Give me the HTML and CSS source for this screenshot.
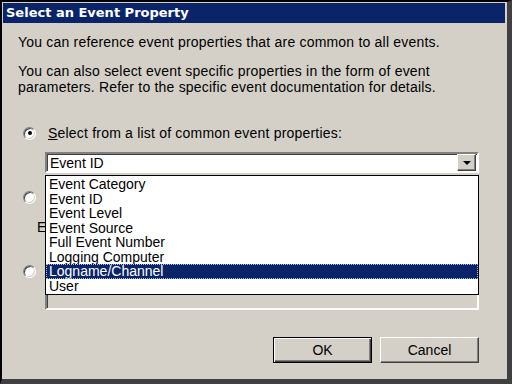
FILE: index.html
```
<!DOCTYPE html>
<html lang="en">
<head>
    <meta charset="UTF-8">
    <meta name="viewport" content="width=device-width, initial-scale=1.0">
    <title>Select an Event Property</title>
    <link rel="stylesheet" href="styles.css">
</head>
<body>
    <div class="window">
        <div class="titlebar">Select an Event Property</div>
        <div class="content">
            <p class="intro first">You can reference event properties that are common to all events.</p>
            <p class="intro second">You can also select event specific properties in the form of event<br>parameters. Refer to the specific event documentation for details.</p>

            <div class="option opt-common">
                <span class="radio checked"></span>
                <span class="option-text"><u>S</u>elect from a list of common event properties:</span>
            </div>
            <div class="combo-wrap">
                <div class="combo">
                    <span class="combo-value">Event ID</span>
                    <span class="combo-btn"><span class="arrow"></span></span>
                </div>
                <ul class="dropdown">
                    <li>Event Category</li>
                    <li>Event ID</li>
                    <li>Event Level</li>
                    <li>Event Source</li>
                    <li>Full Event Number</li>
                    <li>Logging Computer</li>
                    <li class="selected">Logname/Channel</li>
                    <li>User</li>
                </ul>
            </div>

            <!-- these two rows sit behind the open dropdown -->
            <div class="option opt-params" aria-label="Select from a list of event parameters">
                <span class="radio"></span>
            </div>
            <div class="sub-label">E</div>

            <div class="option opt-index" aria-label="Enter a parameter index">
                <span class="radio"></span>
            </div>
            <div class="edit"></div>

            <div class="buttons">
                <button class="btn default">OK</button>
                <button class="btn">Cancel</button>
            </div>
        </div>
    </div>
</body>
</html>
```
FILE: styles.css
```
* {
    box-sizing: border-box;
}
body {
    margin: 0;
    padding: 0;
    background-color: #000;
    font-family: 'Liberation Sans', Arial, sans-serif;
    font-size: 14px;
    color: #000;
}
.window {
    width: 512px;
    height: 384px;
    background-color: #d4d0c8;
    border-top: 2px solid #000;
    border-left: 2px solid #000;
    border-right: 5px solid #404040;
    border-bottom: 5px solid #404040;
    padding: 1px 2px 0 1px;
    display: flex;
    flex-direction: column;
}
.titlebar {
    height: 20px;
    background-color: #0a246a;
    color: #fff;
    font-family: 'DejaVu Sans', sans-serif;
    font-weight: bold;
    font-size: 13px;
    line-height: 20px;
    padding-left: 3px;
}
.content {
    padding: 0 26px 0 15px;
    display: flex;
    flex-direction: column;
}
.intro {
    margin: 0;
    line-height: 14px;
    letter-spacing: 0.2px;
}
.intro.first {
    margin-top: 12px;
}
.intro.second {
    margin-top: 14px;
    line-height: 16px;
}
.option {
    display: flex;
    align-items: center;
    height: 14px;
    line-height: 14px;
    letter-spacing: 0.2px;
}
.opt-common {
    margin-top: 31px;
}
.opt-params {
    margin-top: 17px;
}
.opt-index {
    margin-top: 30px;
}
.radio {
    width: 13px;
    height: 13px;
    margin-left: 5px;
    margin-right: 12px;
    border-radius: 50%;
    background: #fff;
    border: 1px solid #808080;
    border-right-color: #fff;
    border-bottom-color: #fff;
    box-shadow: inset 1px 1px 0 #404040, inset -1px -1px 0 #d4d0c8;
    display: flex;
    align-items: center;
    justify-content: center;
}
.radio.checked::after {
    content: '';
    width: 4px;
    height: 4px;
    border-radius: 50%;
    background: #000;
}
.combo-wrap {
    position: relative;
    margin: 12px 0 0 27px;
}
.combo {
    height: 21px;
    background: #fff;
    border: 2px solid;
    border-color: #808080 #fff #fff #808080;
    box-shadow: inset 1px 1px 0 #404040;
    display: flex;
    align-items: center;
    justify-content: space-between;
    padding: 0 1px 0 3px;
}
.combo-btn {
    width: 19px;
    height: 17px;
    background: #d4d0c8;
    border: 1px solid;
    border-color: #fff #404040 #404040 #fff;
    box-shadow: inset -1px -1px 0 #808080;
    display: flex;
    align-items: center;
    justify-content: center;
}
.arrow {
    width: 0;
    height: 0;
    border-left: 4px solid transparent;
    border-right: 4px solid transparent;
    border-top: 4px solid #000;
}
.dropdown {
    position: absolute;
    top: 23px;
    left: 0;
    right: 0;
    margin: 0;
    padding: 1px 0;
    list-style: none;
    background: #fff;
    border: 1px solid #000;
    z-index: 2;
}
.dropdown li {
    height: 14.5px;
    line-height: 14px;
    padding-left: 3px;
    white-space: nowrap;
}
.dropdown li.selected {
    background: #0a246a;
    color: #fff;
    outline: 1px dotted #b8bcd8;
    outline-offset: -1px;
}
.sub-label {
    margin: 16px 0 0 19px;
    line-height: 14px;
}
.edit {
    height: 22px;
    margin: 10px 0 0 27px;
    border: 2px solid;
    border-color: #808080 #fff #fff #808080;
    box-shadow: inset 1px 1px 0 #404040;
}
.buttons {
    display: flex;
    justify-content: flex-end;
    gap: 8px;
    margin-top: 27px;
}
.btn {
    width: 99px;
    height: 26px;
    font-family: 'Liberation Sans', Arial, sans-serif;
    font-size: 14px;
    color: #000;
    background: #d4d0c8;
    border: 1px solid;
    border-color: #fff #404040 #404040 #fff;
    box-shadow: inset -1px -1px 0 #808080;
    padding: 0;
}
.btn.default {
    border: 1px solid #000;
    box-shadow: inset 1px 1px 0 #fff, inset -1px -1px 0 #404040, inset -2px -2px 0 #808080;
}
```
